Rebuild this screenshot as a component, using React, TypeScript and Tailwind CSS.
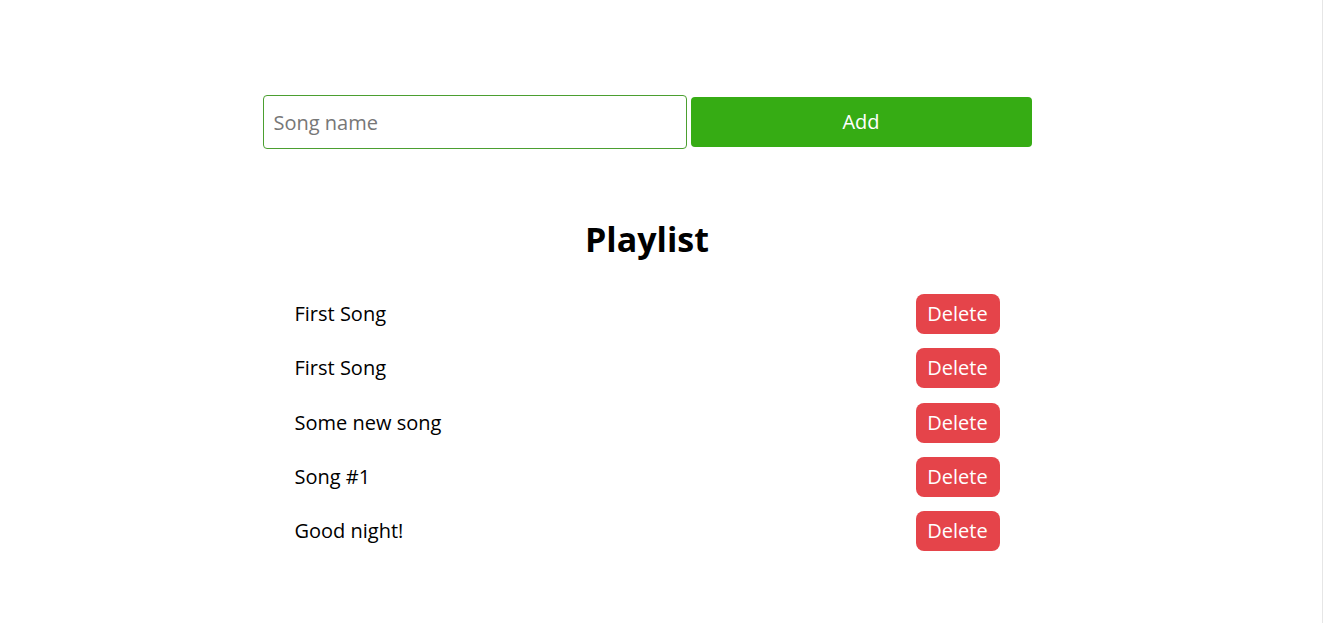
import React, { useState } from "react";

const font = { fontFamily: '"Segoe Print", "Comic Sans MS", "Open Sans", sans-serif' };

export default function App() {
  const [songs, setSongs] = useState<string[]>([
    "First Song",
    "First Song",
    "Some new song",
    "Song #1",
    "Good night!",
  ]);
  const [name, setName] = useState("");

  return (
    <div className="flex min-h-[623px] w-[1323px] bg-white text-black" style={font}>
      <div className="w-[1294px] flex justify-center">
        <div className="w-[769px] pt-[95px] flex flex-col">
          <div className="flex items-center gap-[4px]">
            <input
              value={name}
              onChange={(e) => setName(e.target.value)}
              placeholder="Song name"
              className="w-[424px] h-[54px] border border-[#4b9f30] rounded-[4px] px-[10px] text-[20px] text-black placeholder:text-[#777] outline-none"
              style={font}
            />
            <button
              onClick={() => {
                if (name.trim()) {
                  setSongs([...songs, name.trim()]);
                  setName("");
                }
              }}
              className="flex-1 h-[50px] bg-[#36ac14] rounded-[4px] text-white text-[20px]"
              style={font}
            >
              Add
            </button>
          </div>
          <h1 className="mt-[68px] text-center text-[34px] font-bold leading-[44px]">Playlist</h1>
          <ul className="mt-[33px] px-[32px] flex flex-col gap-[14.25px]">
            {songs.map((s, i) => (
              <li key={i} className="flex items-center justify-between h-[40px]">
                <span className="text-[20px]">{s}</span>
                <button
                  onClick={() => setSongs(songs.filter((_, j) => j !== i))}
                  className="w-[84px] h-[40px] rounded-[8px] bg-[#e5444a] text-white text-[20px]"
                  style={font}
                >
                  Delete
                </button>
              </li>
            ))}
          </ul>
        </div>
      </div>
      <div className="flex-1 border-r border-[#e6e6e6]" />
    </div>
  );
}
